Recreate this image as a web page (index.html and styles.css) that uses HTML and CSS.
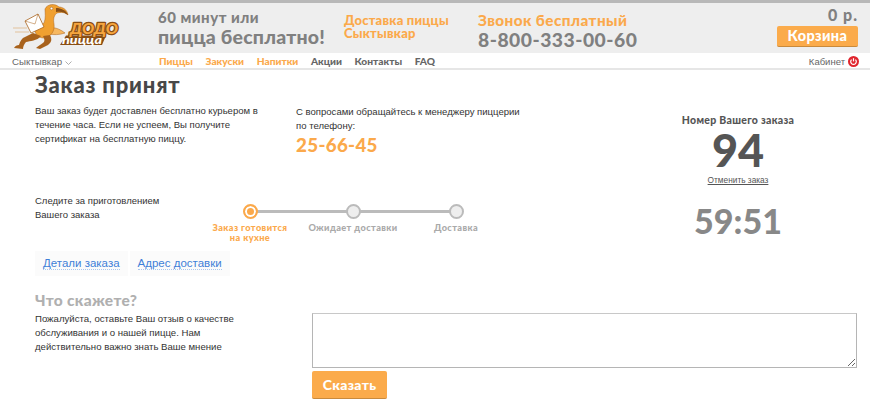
FILE: index.html
```html
<!DOCTYPE html>
<html lang="ru">
<head>
<meta charset="utf-8">
<title>Заказ принят</title>
<link rel="stylesheet" href="styles.css">
</head>
<body>
<header class="top">
  <svg class="logo" viewBox="12 3 108 47" width="108" height="47" aria-label="Додо Пицца">
    <path d="M44 30 C50 27 56 26 65 33 C59 35 54 35 49 34 Z" fill="#f7b860" stroke="#a8621c" stroke-width=".5"/>
    <path d="M45 9 C47 4 55 3 59 7 C62 7 67 9 68 15 C65 12 61 12 57 13 C54 15 53 19 54 24 C55 31 51 37 44 38 C38 38 35 34 35 30 L44 23 C46 18 45 13 45 9 Z" fill="#f0a030" stroke="#a8621c" stroke-width=".5"/>
    <circle cx="51.500" cy="8.500" r="1.300" fill="#fff" stroke="#7a4412" stroke-width=".4"/>
    <path d="M56 8 C61 8 66 10 68 15 C64 12 61 11 56 12 Z" fill="#8a4f14"/>
    <path d="M33 33 L41 36 C37 41 30 41 26 42 C24 44 23 47 23 49 L14 48 C15 46 17 45 19 45 C20 41 22 38 25 37 Z" fill="#a8621c"/>
    <path d="M43 36 L50 35 C52 39 52 42 48 45 L40 49 L36 48 C38 46 42 44 44 42 C45 40 44 38 43 36 Z" fill="#a8621c"/>
    <path d="M25 21 L38 14 L44 27 L31 33 Z" fill="#fff" stroke="#a8621c" stroke-width=".8"/>
    <path d="M25 21 L35 24 L38 14" fill="none" stroke="#a8621c" stroke-width=".5"/>
    <path d="M13 28 H27 M15 32 H29" stroke="#dcb07a" stroke-width=".7"/>
    <path d="M60 45 L66 35.500 L106 35.500 L102 45 Z" fill="#8a4f14"/>
    <text class="logo-word" x="70" y="34.200" textLength="48" lengthAdjust="spacingAndGlyphs">ДОДО</text>
    <text class="logo-sub" x="62" y="43.500" textLength="40" lengthAdjust="spacingAndGlyphs">пицца</text>
  </svg>
  <div class="promo">60 минут или<br><strong>пицца бесплатно!</strong></div>
  <div class="city">Доставка пиццы<br>Сыктывкар</div>
  <div class="call"><span class="call-note">Звонок бесплатный</span><br>8-800-333-00-60</div>
  <div class="cart">
    <div class="sum">0 р.</div>
    <a class="cart-btn">Корзина</a>
  </div>
</header>

<nav class="nav">
  <div class="town">Сыктывкар <svg class="chev" width="7" height="4" viewBox="0 0 7 4"><path d="M.5 .5 L3.5 3.5 L6.5 .5" fill="none" stroke="#999" stroke-width=".8"/></svg></div>
  <ul class="menu">
    <li class="hot">Пиццы</li>
    <li class="hot">Закуски</li>
    <li class="hot">Напитки</li>
    <li>Акции</li>
    <li>Контакты</li>
    <li>FAQ</li>
  </ul>
  <div class="account">Кабинет
    <svg width="11" height="11" viewBox="0 0 11 11"><circle cx="5.5" cy="5.5" r="5.5" fill="#e0252d"/><path d="M3.6 3.6 A2.8 2.8 0 1 0 7.4 3.6" fill="none" stroke="#fff" stroke-width="1.2"/><path d="M5.5 2.2 V5.4" stroke="#fff" stroke-width="1.2"/></svg>
  </div>
</nav>

<main class="page">
  <div class="order">
    <div class="order-main">
      <h1 class="title">Заказ принят</h1>
      <div class="info">
        <p class="info-text">Ваш заказ будет доставлен бесплатно курьером в течение часа. Если не успеем, Вы получите сертификат на бесплатную пиццу.</p>
        <div class="manager">
          <p>С вопросами обращайтесь к менеджеру пиццерии<br>по телефону:</p>
          <div class="manager-phone">25-66-45</div>
        </div>
      </div>
      <div class="track">
        <p class="track-text">Следите за приготовлением<br>Вашего заказа</p>
        <ol class="steps">
          <li class="step active"><span class="dot"></span>Заказ готовится<br>на кухне</li>
          <li class="step"><span class="dot"></span>Ожидает доставки</li>
          <li class="step"><span class="dot"></span>Доставка</li>
        </ol>
      </div>
      <div class="tabs">
        <a class="tab"><span>Детали заказа</span></a>
        <a class="tab"><span>Адрес доставки</span></a>
      </div>
    </div>
    <aside class="side">
      <div class="num-label">Номер Вашего заказа</div>
      <div class="num">94</div>
      <a class="cancel">Отменить заказ</a>
      <div class="timer">59:51</div>
    </aside>
  </div>
  <h2 class="say">Что скажете?</h2>
  <div class="feedback">
    <p class="feedback-text">Пожалуйста, оставьте Ваш отзыв о качестве обслуживания и о нашей пицце. Нам действительно важно знать Ваше мнение</p>
    <div class="feedback-form">
      <textarea class="area"></textarea>
      <button class="send">Сказать</button>
    </div>
  </div>
</main>
</body>
</html>
```

FILE: styles.css
```css
* { box-sizing: border-box; }
html, body { margin: 0; padding: 0; }
body {
  width: 870px;
  height: 400px;
  overflow: hidden;
  background: #fff;
  font-family: "Liberation Sans", Arial, sans-serif;
  color: #333;
}
p, h1, h2, ul, ol { margin: 0; padding: 0; list-style: none; }

.top {
  display: flex;
  height: 53px;
  background: #eee;
  border-top: 3px solid #b8b8b8;
  font-family: Lato, "Open Sans", sans-serif;
  font-weight: 900;
}
.logo { margin-left: 12px; flex: none; display: block; }
.logo-word {
  font: italic 900 15px Lato, sans-serif;
  fill: #f5a53f;
  stroke: #8a4f14;
  stroke-width: 2.4px;
  stroke-linejoin: round;
  paint-order: stroke;
}
.logo-sub { font: italic 900 12px Lato, sans-serif; fill: #fff; }

.promo {
  margin-left: 38px;
  width: 186px;
  padding-top: 5px;
  font-size: 15px;
  line-height: 19px;
  color: #808080;
  letter-spacing: .5px;
}
.promo strong { font-size: 19.5px; font-weight: 900; letter-spacing: .2px; }
.city {
  width: 134px;
  padding-top: 11px;
  font-size: 13px;
  line-height: 13px;
  color: #fba94b;
  letter-spacing: .2px;
}
.call {
  width: 299px;
  padding-top: 6px;
  font-size: 19.3px;
  line-height: 19px;
  color: #808080;
  letter-spacing: .5px;
}
.call-note { font-size: 15.3px; color: #fba94b; letter-spacing: .4px; }
.cart {
  width: 81px;
  display: flex;
  flex-direction: column;
  align-items: flex-end;
  padding-top: 2px;
}
.sum { font-size: 16px; line-height: 20px; color: #808080; letter-spacing: 1px; }
.cart-btn {
  display: block;
  width: 81px;
  height: 21px;
  margin-top: 1px;
  background: #fbab4b;
  border-bottom: 1px solid #c98a3c;
  border-radius: 2px;
  color: #fff;
  font-size: 14.5px;
  line-height: 20px;
  text-align: center;
  letter-spacing: .4px;
}

.nav {
  display: flex;
  align-items: center;
  box-sizing: content-box;
  height: 14px;
  padding: 1px 11px 0 12px;
  border-bottom: 2px solid #e6e6e6;
}
.town { width: 147px; font-size: 9.7px; color: #666; }
.chev { vertical-align: 0; }
.menu {
  display: flex;
  gap: 12.6px;
  flex: 1;
  font: 900 10.2px Lato, "Open Sans", sans-serif;
  color: #666;
}
.hot { color: #fba94b; }
.account { display: flex; align-items: center; gap: 3px; font-size: 9.5px; color: #666; }

.page { padding: 0 13px 0 35px; }
.order { display: flex; }
.order-main { width: 603px; flex: none; }
.title {
  margin-top: 1px;
  font: 900 22px/28px Lato, "Open Sans", sans-serif;
  color: #484848;
  letter-spacing: .8px;
}
.info { display: flex; margin-top: 5px; font-size: 9.55px; line-height: 14px; }
.info-text { width: 261px; flex: none; padding-right: 34px; }
.manager p { margin-top: 1px; }
.manager-phone {
  font: 900 18.8px/24px Lato, "Open Sans", sans-serif;
  color: #fba94b;
  letter-spacing: .3px;
}
.track { display: flex; margin-top: 37px; }
.track-text { width: 163.5px; flex: none; font-size: 9.5px; line-height: 14px; }
.steps { display: flex; padding-top: 10px; }
.step {
  position: relative;
  width: 103px;
  text-align: center;
  font: 900 9.2px/10px Lato, "Open Sans", sans-serif;
  color: #aaa;
  letter-spacing: .4px;
}
.step::before {
  content: "";
  position: absolute;
  left: 51px;
  top: 6px;
  width: 103px;
  height: 3px;
  background: #bbb;
}
.step:last-child::before { display: none; }
.dot {
  position: relative;
  display: block;
  width: 15px;
  height: 15px;
  margin: 0 auto 4px;
  border: 2px solid #bbb;
  border-radius: 50%;
  background: #eee;
}
.active { color: #fba94b; }
.active .dot {
  border-color: #fba94b;
  background: #fba94b;
  box-shadow: inset 0 0 0 2px #fff;
}
.tabs { display: flex; gap: 2px; margin-top: 8px; }
.tab {
  display: block;
  height: 25px;
  padding: 0 8px;
  background: #fbfbfb;
  font-size: 11.5px;
  line-height: 24px;
  color: #3f7fd8;
}
.tab span { border-bottom: 1px dotted #a9c6ee; }

.side { width: 200px; flex: none; text-align: center; padding-top: 43px; }
.num-label { font: 900 10.5px/14px Lato, "Open Sans", sans-serif; color: #555; letter-spacing: .3px; }
.num { font: 900 45px/44px Lato, "Open Sans", sans-serif; color: #555; margin-top: 1px; }
.cancel { display: block; font-size: 8.300px; line-height: 10px; margin-top: 3px; color: #555; text-decoration: underline; }
.timer { font: 900 34px/40px Lato, "Open Sans", sans-serif; color: #888; margin-top: 16px; }

.say {
  margin-top: 14px;
  font: 900 15.5px/20px Lato, "Open Sans", sans-serif;
  color: #b0b0b0;
  letter-spacing: .3px;
}
.feedback { display: flex; }
.feedback-text { width: 277px; flex: none; padding: 2px 65px 0 0; font-size: 9.6px; line-height: 14px; }
.feedback-form { width: 545px; margin-top: 3px; }
.area {
  display: block;
  width: 545px;
  height: 55px;
  margin: 0;
  border: 1px solid #b5b5b5;
  border-top-color: #c8c8c8;
  background: #fff;
}
.send {
  display: block;
  width: 75px;
  height: 28px;
  margin-top: 3px;
  padding: 0;
  border: 0;
  border-bottom: 1px solid #c98a3c;
  border-radius: 2px;
  background: #fbab4b;
  color: #fff;
  font: 900 14px Lato, "Open Sans", sans-serif;
  letter-spacing: .3px;
}
```
